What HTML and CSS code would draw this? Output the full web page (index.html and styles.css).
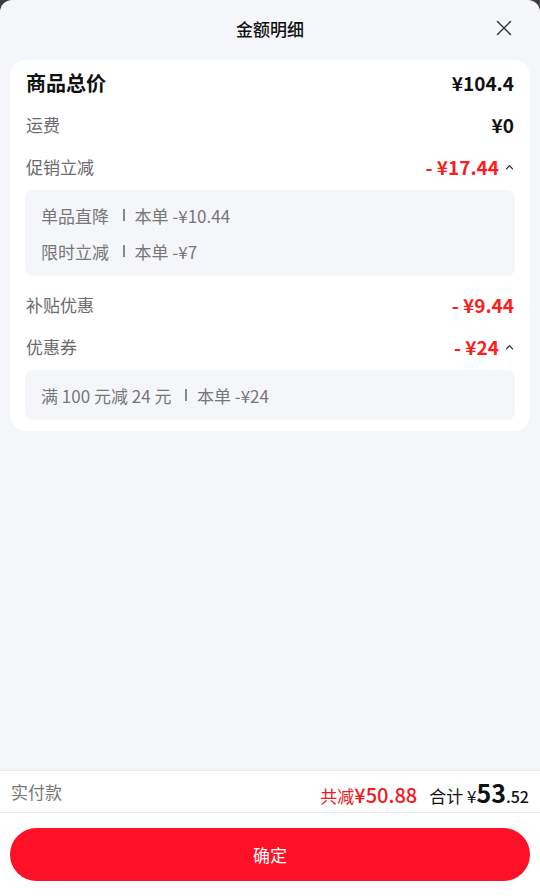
FILE: index.html
```html
<!DOCTYPE html>
<html lang="zh-CN">
<head>
<meta charset="utf-8">
<title>金额明细</title>
<link rel="stylesheet" href="styles.css">
</head>
<body>
<div class="sheet">
  <header class="header">
    <div class="title">金额明细</div>
    <svg class="close" width="16" height="16" viewBox="0 0 16 16"><path d="M1.5 1.5 L14.5 14.5 M14.5 1.5 L1.5 14.5" stroke="#333" stroke-width="1.4" fill="none" stroke-linecap="round"/></svg>
  </header>
  <section class="card">
    <div class="row row-main">
      <span class="label-main">商品总价</span>
      <span class="val">¥104.4</span>
    </div>
    <div class="row">
      <span class="label">运费</span>
      <span class="val">¥0</span>
    </div>
    <div class="row">
      <span class="label">促销立减</span>
      <span class="val-wrap"><span class="val red">- ¥17.44</span><svg class="caret" width="9" height="6" viewBox="0 0 9 6"><polyline points="1.5,4.8 4.5,1.6 7.5,4.8" stroke="#222" stroke-width="1.2" fill="none" stroke-linecap="round" stroke-linejoin="round"/></svg></span>
    </div>
    <div class="sub">
      <div class="sub-line">单品直降<i class="bar"></i>本单 -¥10.44</div>
      <div class="sub-line">限时立减<i class="bar"></i>本单 -¥7</div>
    </div>
    <div class="row row-after">
      <span class="label">补贴优惠</span>
      <span class="val red">- ¥9.44</span>
    </div>
    <div class="row">
      <span class="label">优惠券</span>
      <span class="val-wrap"><span class="val red">- ¥24</span><svg class="caret" width="9" height="6" viewBox="0 0 9 6"><polyline points="1.5,4.8 4.5,1.6 7.5,4.8" stroke="#222" stroke-width="1.2" fill="none" stroke-linecap="round" stroke-linejoin="round"/></svg></span>
    </div>
    <div class="sub">
      <div class="sub-line">满 100 元减 24 元<i class="bar"></i>本单 -¥24</div>
    </div>
  </section>
  <div class="spacer"></div>
  <footer class="footer">
    <div class="pay">
      <span class="pay-label">实付款</span>
      <span class="pay-right">
        <span class="saved"><span class="saved-t">共减</span><span class="saved-n">¥50.88</span></span>
        <span class="total"><span class="total-t">合计 ¥</span><span class="total-big">53</span><span class="total-small">.52</span></span>
      </span>
    </div>
    <div class="btn-area">
      <button class="btn">确定</button>
    </div>
  </footer>
</div>
</body>
</html>
```
FILE: styles.css
```css
* { box-sizing: border-box; }
html, body {
  margin: 0;
  padding: 0;
  height: 100%;
  background: #3c3c3c;
}
body {
  font-family: "Noto Sans CJK SC", "Noto Sans", sans-serif;
  color: #111;
}
.sheet {
  height: 896px;
  background: #f5f6fa;
  border-radius: 12px 12px 0 0;
  display: flex;
  flex-direction: column;
  overflow: hidden;
}
.header {
  height: 56px;
  display: flex;
  align-items: center;
  justify-content: center;
  position: relative;
}
.title {
  font-size: 17px;
  font-weight: 500;
  color: #111;
}
.close {
  position: absolute;
  right: 28px;
  top: 20px;
}
.card {
  margin: 4px 10px 0;
  background: #fff;
  border-radius: 16px;
  padding: 1px 15px 11px;
}
.row {
  height: 42px;
  display: flex;
  align-items: center;
  justify-content: space-between;
  padding: 0 1px;
}
.label-main {
  font-size: 20px;
  font-weight: 700;
  color: #111;
}
.label {
  font-size: 17px;
  color: #6b6b6b;
}
.val {
  font-size: 19px;
  font-weight: 700;
  color: #111;
}
.red { color: #fa1e1e; }
.val-wrap {
  display: flex;
  align-items: center;
}
.caret {
  margin-left: 6px;
  margin-top: 2px;
}
.sub {
  margin-top: 3px;
  background: #f5f6fa;
  border-radius: 8px;
  padding: 7px 16px;
}
.sub-line {
  height: 36px;
  display: flex;
  align-items: center;
  font-size: 17px;
  color: #777;
}
.bar {
  display: inline-block;
  width: 1.5px;
  height: 12px;
  background: #888;
  margin: 0 10px 0 14px;
}
.row-after { margin-top: 7px; }
.spacer { flex: 1; }
.footer {
  background: #fff;
}
.pay {
  height: 43px;
  border-top: 1px solid #ebebeb;
  border-bottom: 1px solid #ebebeb;
  display: flex;
  align-items: center;
  justify-content: space-between;
  padding: 0 11px;
}
.pay-label {
  font-size: 17px;
  color: #777;
}
.pay-right {
  display: flex;
  align-items: baseline;
}
.saved { color: #f01a1f; }
.saved-t { font-size: 17px; }
.saved-n { font-size: 20px; font-weight: 500; }
.total { margin-left: 12px; color: #111; }
.total-t { font-size: 17px; }
.total-big { font-size: 25px; font-weight: 700; }
.total-small { font-size: 16px; font-weight: 500; }
.btn-area {
  height: 83px;
  padding: 15px 10px 0;
}
.btn {
  width: 100%;
  height: 53px;
  border: none;
  border-radius: 27px;
  background: #fe1126;
  color: #fff;
  font-family: "Noto Sans CJK SC", "Noto Sans", sans-serif;
  font-size: 17px;
  font-weight: 400;
}
```
